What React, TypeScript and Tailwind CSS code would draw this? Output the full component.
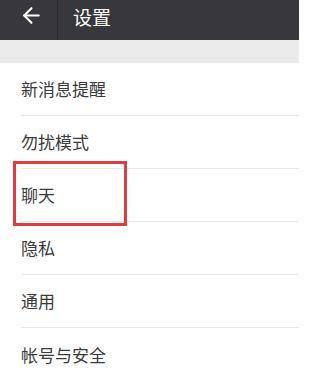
import { ArrowLeft } from 'lucide-react'

const items = ['新消息提醒', '勿扰模式', '聊天', '隐私', '通用', '帐号与安全']

export default function App() {
  return (
    <div
      className="relative w-[299px] h-[383px] overflow-hidden bg-white"
      style={{ fontFamily: '"Noto Sans CJK SC", "Liberation Sans", sans-serif' }}
    >
      <header className="flex h-[40px] items-center bg-[#38383c] text-white">
        <div className="flex h-full w-[58px] items-center justify-center border-r border-[#2e2e31]">
          <ArrowLeft size={25} strokeWidth={2} className="-mt-[9px] ml-[6px]" />
        </div>
        <h1 className="-mt-[7px] pl-[15px] text-[19px] leading-none">设置</h1>
      </header>
      <div className="h-[23px] bg-[#ebebeb]" />
      <ul>
        {items.map((label, i) => (
          <li key={label} className="pl-[21px]">
            <div
              className={`flex h-[53px] items-center text-[17px] text-[#3a3a3a] ${
                i < items.length - 1 ? 'border-b border-[#e8e8e8]' : ''
              }`}
            >
              {label}
            </div>
          </li>
        ))}
      </ul>
      <div className="absolute left-[13px] top-[161px] h-[65px] w-[114px] border-[3px] border-[#e23b3f]" />
    </div>
  )
}
